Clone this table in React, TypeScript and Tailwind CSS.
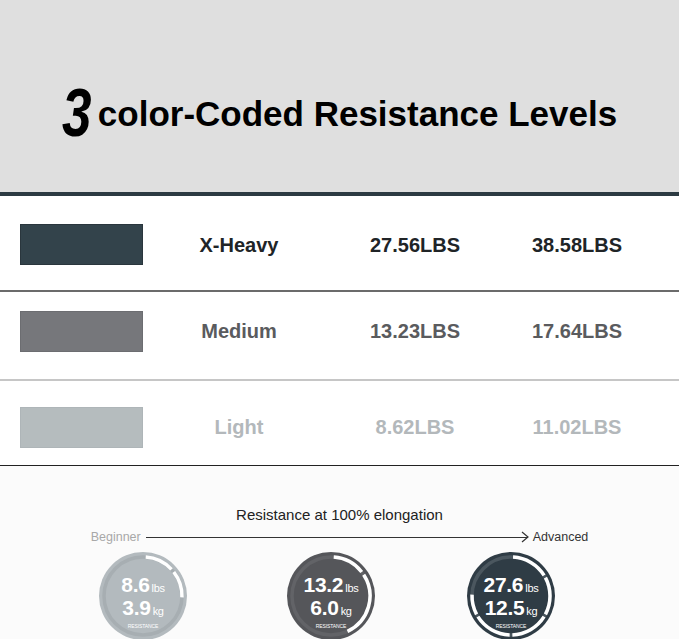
import React from 'react';

type Level = {
  name: string;
  swatch: string;
  text: string;
  min: string;
  max: string;
  rowClass: string;
  divider: string;
};

const levels: Level[] = [
  { name: 'X-Heavy', swatch: 'bg-[#33434b] border-[#2a363d]', text: 'text-[#202427]', min: '27.56LBS', max: '38.58LBS', rowClass: 'h-[94px] pt-[3px]', divider: 'h-[2px] bg-[#6b6b6b]' },
  { name: 'Medium', swatch: 'bg-[#76777b] border-[#6c6d71]', text: 'text-[#5a5b5e]', min: '13.23LBS', max: '17.64LBS', rowClass: 'h-[87px] pb-[9px]', divider: 'h-[2px] bg-[#c6c6c6]' },
  { name: 'Light', swatch: 'bg-[#b5bcbe] border-[#aeb5b8]', text: 'text-[#b3b8bb]', min: '8.62LBS', max: '11.02LBS', rowClass: 'h-[84px] pt-[8px]', divider: 'h-[1px] bg-[#222222]' },
];

// angles in degrees, clockwise from 12 o'clock
function arc(cx: number, cy: number, r: number, a0: number, a1: number) {
  const p = (a: number) => {
    const t = (a * Math.PI) / 180;
    return [cx + r * Math.sin(t), cy - r * Math.cos(t)];
  };
  const [x0, y0] = p(a0);
  const [x1, y1] = p(a1);
  const large = a1 - a0 > 180 ? 1 : 0;
  return `M ${x0} ${y0} A ${r} ${r} 0 ${large} 1 ${x1} ${y1}`;
}

type DialProps = {
  fill: string;
  dim: string;
  segments: [number, number][];
  lbs: string;
  kg: string;
};

const Dial: React.FC<DialProps> = ({ fill, dim, segments, lbs, kg }) => (
  <div className="relative w-[88px] h-[88px] shrink-0">
    <svg className="absolute inset-0" width="88" height="88" viewBox="0 0 88 88">
      <circle cx="44" cy="44" r="44" fill={fill} />
      <circle cx="44" cy="44" r="39" fill="none" stroke={dim} strokeWidth="3.5" />
      {segments.map(([a0, a1], i) => (
        <path key={i} d={arc(44, 44, 39, a0, a1)} fill="none" stroke="#ffffff" strokeWidth="3.5" />
      ))}
    </svg>
    <div className="relative flex flex-col items-center pt-[23px] text-white">
      <div className="flex items-baseline leading-[20px] tracking-[-0.3px]">
        <span className="text-[21px] font-bold">{lbs}</span>
        <span className="text-[11px] ml-[2px]">lbs</span>
      </div>
      <div className="flex items-baseline leading-[19px] tracking-[-0.3px]">
        <span className="text-[21px] font-bold">{kg}</span>
        <span className="text-[11px] ml-[2px]">kg</span>
      </div>
      <div className="text-[5px] leading-[8px] tracking-[-0.1px] mt-[1px]">RESISTANCE</div>
    </div>
  </div>
);

export default function App() {
  return (
    <div className="w-[679px] h-[639px] overflow-hidden bg-white font-['Liberation_Sans',Arial,sans-serif]">
      <div className="h-[192px] bg-[#dfdfdf] flex justify-center pt-[86px]">
        <div className="flex items-center h-[52px] text-black">
          <span className="inline-block w-[33px] text-[68px] leading-none font-bold italic origin-left scale-x-[0.78]">3</span>
          <span className="text-[35px] leading-none font-bold ml-[3px] mt-[2px]">color-Coded Resistance Levels</span>
        </div>
      </div>
      <div className="h-[4px] bg-[#2c3a42]" />

      {levels.map((l) => (
        <div key={l.name}>
          <div className={`flex items-center pl-[20px] ${l.rowClass}`}>
            <div className={`w-[123px] h-[41px] border ${l.swatch}`} />
            <div className={`grid grid-cols-[192px_160px_164px] text-[20px] font-bold ${l.text}`}>
              <div className="text-center">{l.name}</div>
              <div className="text-center">{l.min}</div>
              <div className="text-center">{l.max}</div>
            </div>
          </div>
          <div className={l.divider} />
        </div>
      ))}

      <div className="bg-[#fbfbfb] h-full pt-[40px]">
        <div className="text-center text-[15px] leading-[17px] text-[#222222]">Resistance at 100% elongation</div>
        <div className="flex items-center justify-center mt-[6px] h-[16px] text-[12.5px]">
          <span className="text-[#a8a8a8]">Beginner</span>
          <div className="w-[382px] h-px bg-[#333333] ml-[5px]" />
          <svg width="8" height="12" viewBox="0 0 8 12" className="-ml-[7px]">
            <path d="M1 1 L7 6 L1 11" fill="none" stroke="#333333" strokeWidth="1.2" />
          </svg>
          <span className="text-[#333333] ml-[4px]">Advanced</span>
        </div>
        <div className="flex mt-[7px] pl-[99px]">
          <Dial fill="#b3babe" dim="#a7aeb2" segments={[[4, 47], [52, 92]]} lbs="8.6" kg="3.9" />
          <div className="ml-[100px]">
            <Dial fill="#55565a" dim="#626367" segments={[[4, 52], [57, 155]]} lbs="13.2" kg="6.0" />
          </div>
          <div className="ml-[92px]">
            <Dial fill="#2f3c45" dim="#4b575f" segments={[[3, 58], [62, 118], [122, 178], [182, 238], [242, 272]]} lbs="27.6" kg="12.5" />
          </div>
        </div>
      </div>
    </div>
  );
}
